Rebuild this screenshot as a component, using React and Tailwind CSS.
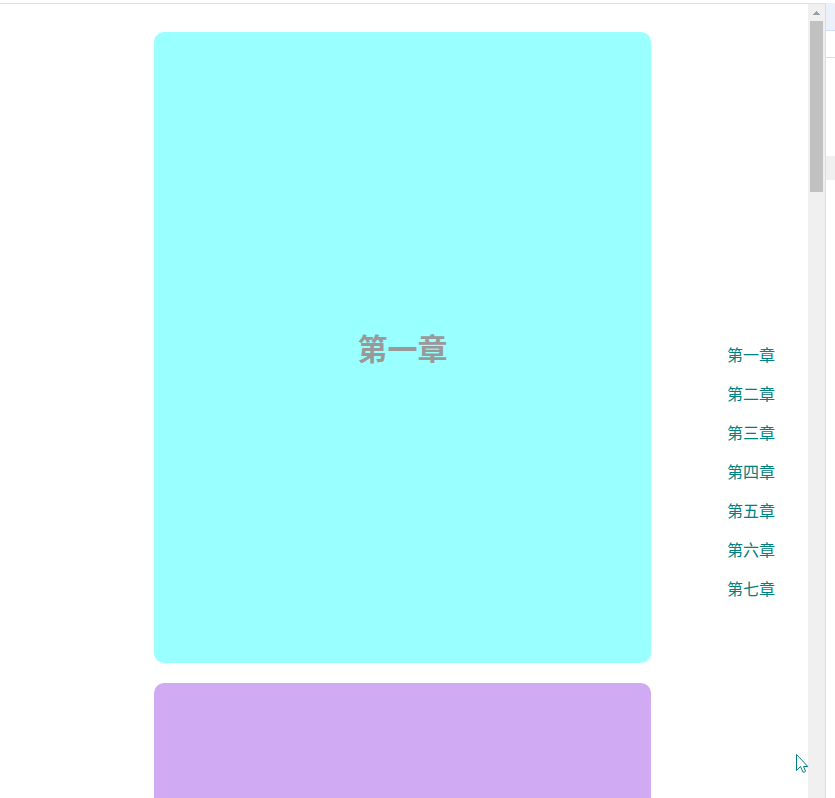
const chapters = ["第一章", "第二章", "第三章", "第四章", "第五章", "第六章", "第七章"];

function Scrollbar() {
  return (
    <div aria-hidden="true" className="flex w-[17px] shrink-0 flex-col items-center bg-[#f0f0f0]">
      <div className="flex h-[17px] items-center justify-center">
        <svg width="7" height="4" viewBox="0 0 7 4" shapeRendering="crispEdges" fill="#96a3a6">
          <path d="M3 0h1v1h1v1h1v1h1v1H0V3h1V2h1V1h1z" />
        </svg>
      </div>
      <div className="h-[171px] w-[13px] bg-[#c1c1c1]" />
    </div>
  );
}

function SidePanel() {
  return (
    <div aria-hidden="true" className="w-[10px] shrink-0 border-l border-[#cfdefa] bg-white">
      <div className="h-7 border-b border-[#cfdefa] bg-[#ebf0fa]" />
      <div className="h-[27px] border-b border-[#cfdefa]" />
      <div className="mt-[98px] h-6 bg-[#f0f0f0]" />
    </div>
  );
}

function Cursor() {
  return (
    <svg
      aria-hidden="true"
      className="absolute top-[754px] right-[26px]"
      width="13"
      height="20"
      viewBox="0 0 13 20"
      fill="white"
      stroke="#008080"
      strokeWidth="1"
    >
      <path d="M.5.5v16l4-4 2.4 5.5q1.8 1 2.6-1L7.5 12.5h4.3z" />
    </svg>
  );
}

export default function App() {
  return (
    <div className="relative flex h-screen flex-col overflow-hidden bg-white pt-[3px] font-['Noto_Sans_CJK_SC',sans-serif]">
      <div className="flex min-h-0 flex-1">
        <div className="flex min-w-0 flex-1 border-t border-[#e0e0e0]">
          <div className="grid min-w-0 flex-1 grid-cols-[1fr_497px_1fr] overflow-hidden pr-[3px]">
            <main className="col-start-2 flex flex-col gap-5 pt-7">
              <section id="chapter-1" className="flex h-[631px] shrink-0 items-center justify-center rounded-[10px] bg-[#99ffff] pb-0.5">
                <h1 className="text-[30px] leading-10 font-bold text-[#999999]">第一章</h1>
              </section>
              <section id="chapter-2" className="h-[631px] shrink-0 rounded-[10px] bg-[#d0aaf3]" />
            </main>
            <nav className="flex flex-col items-end pt-[331px] pr-[30px]">
              {chapters.map((name, i) => (
                <a key={name} href={`#chapter-${i + 1}`} className="text-base leading-[39px] text-[#008080]">
                  {name}
                </a>
              ))}
            </nav>
          </div>
          <Scrollbar />
        </div>
        <SidePanel />
      </div>
      <Cursor />
    </div>
  );
}
